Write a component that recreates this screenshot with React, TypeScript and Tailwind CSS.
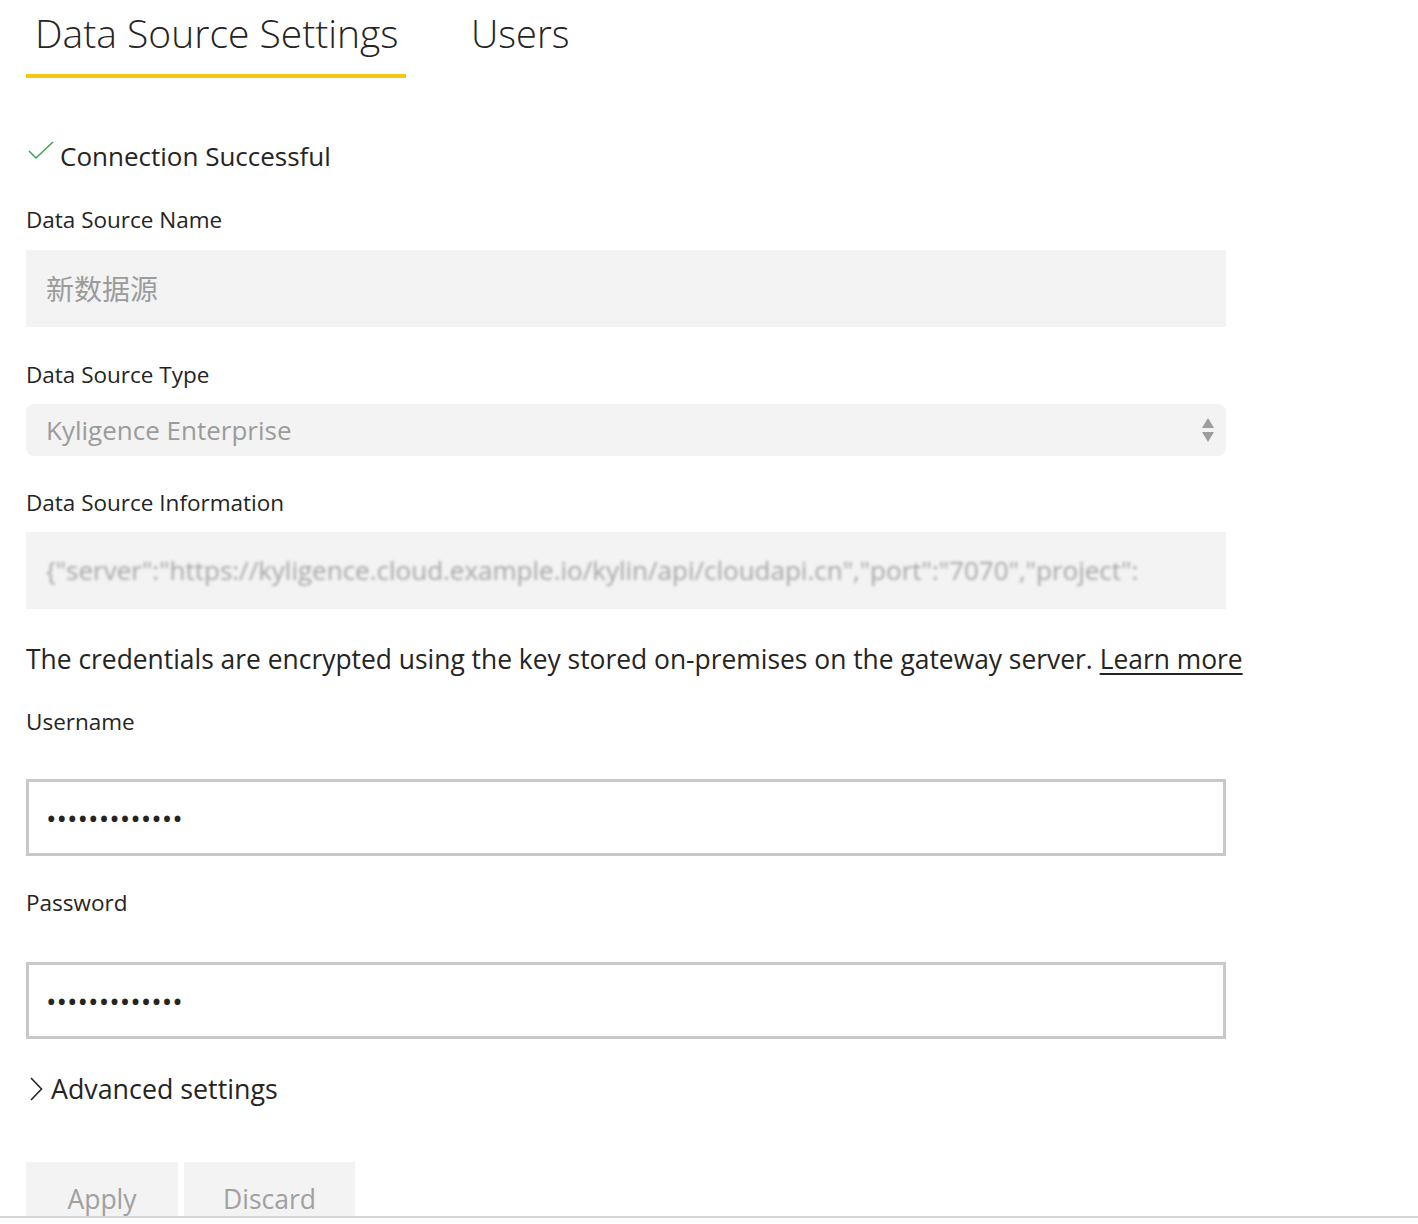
const font = { fontFamily: '"Open Sans", "Noto Sans CJK SC", sans-serif' }

function Label({ children }: { children: React.ReactNode }) {
    return <div className="text-[22.5px] leading-[30px] text-[#252423]">{children}</div>
}

function PasswordBox() {
    return (
        <div className="h-[77px] w-[1200px] border-[3px] border-[#c8c8c8] bg-white flex items-center pl-[17px]">
            <span className="text-[28px] leading-none text-[#252423]">•••••••••••••</span>
        </div>
    )
}

export default function App() {
    return (
        <div className="h-[1224px] flex flex-col bg-white overflow-hidden" style={font}>
            <div className="flex-1 overflow-hidden pl-[26px]">
                {/* Tabs */}
                <div className="flex items-end gap-[65px] whitespace-nowrap">
                    <div className="w-[380px] border-b-[4px] border-[#f2c811] pb-[14px] pl-[9px] pt-[6px]">
                        <span className="text-[39px] font-light leading-[54px] text-[#252423]">Data Source Settings</span>
                    </div>
                    <div className="pb-[18px] pt-[6px]">
                        <span className="text-[38px] font-light leading-[54px] text-[#252423]">Users</span>
                    </div>
                </div>

                {/* Status */}
                <div className="mt-[60px] flex items-center gap-[5px]">
                    <svg width="27" height="20" viewBox="0 0 27 20" className="-mt-[10px] ml-[2px]">
                        <path d="M1 10 L8 17 L25 1" fill="none" stroke="#3fa552" strokeWidth="1.6" />
                    </svg>
                    <span className="text-[26px] leading-[36px] text-[#252423]">Connection Successful</span>
                </div>

                <div className="mt-[31px] w-[1200px]">
                    <Label>Data Source Name</Label>
                    <div className="mt-[15px] h-[77px] bg-[#f3f3f3] flex items-center px-[20px]">
                        <span className="text-[28px] text-[#9b9b9b]">新数据源</span>
                    </div>

                    <div className="mt-[33px]">
                        <Label>Data Source Type</Label>
                    </div>
                    <div className="mt-[14px] h-[52px] rounded-[8px] bg-[#f3f3f3] flex items-center justify-between pl-[20px] pr-[11px]">
                        <span className="text-[26px] text-[#9b9b9b]">Kyligence Enterprise</span>
                        <svg width="14" height="26" viewBox="0 0 14 26">
                            <path d="M7 1 L13 11 L1 11 Z" fill="#9d9d9d" />
                            <path d="M1 15 L13 15 L7 25 Z" fill="#9d9d9d" />
                        </svg>
                    </div>

                    <div className="mt-[32px]">
                        <Label>Data Source Information</Label>
                    </div>
                    <div className="mt-[14px] h-[77px] bg-[#f3f3f3] flex items-center px-[20px] overflow-hidden">
                        <span className="whitespace-nowrap text-[26px] text-[#a6a6a6] blur-[1.5px]">
                            {'{"server":"https://kyligence.cloud.example.io/kylin/api/cloudapi.cn","port":"7070","project":'}
                        </span>
                    </div>
                </div>

                <div className="mt-[32px] text-[26.4px] leading-[36px] text-[#252423] whitespace-nowrap">
                    The credentials are encrypted using the key stored on-premises on the gateway server.{' '}
                    <a className="underline underline-offset-[4px] text-[#252423]">Learn more</a>
                </div>

                <div className="mt-[30px]">
                    <Label>Username</Label>
                </div>
                <div className="mt-[42px]">
                    <PasswordBox />
                </div>

                <div className="mt-[32px]">
                    <Label>Password</Label>
                </div>
                <div className="mt-[44px]">
                    <PasswordBox />
                </div>

                <div className="mt-[32px] flex items-center gap-[8px]">
                    <svg width="14" height="24" viewBox="0 0 14 24" className="ml-[3px]">
                        <path d="M2 1 L12.5 12 L2 23" fill="none" stroke="#252423" strokeWidth="1.6" />
                    </svg>
                    <span className="text-[26.8px] leading-[36px] text-[#252423]">Advanced settings</span>
                </div>

                <div className="mt-[55px] flex gap-[6px]">
                    <button className="w-[152px] h-[60px] bg-[#f3f3f3] text-[26.5px] text-[#a0a0a0] pt-[16px]">Apply</button>
                    <button className="w-[171px] h-[60px] bg-[#f3f3f3] text-[26.5px] text-[#a0a0a0] pt-[16px]">Discard</button>
                </div>
            </div>
            <div className="h-[8px] border-t-2 border-[#d6d6d6] bg-white" />
        </div>
    )
}
